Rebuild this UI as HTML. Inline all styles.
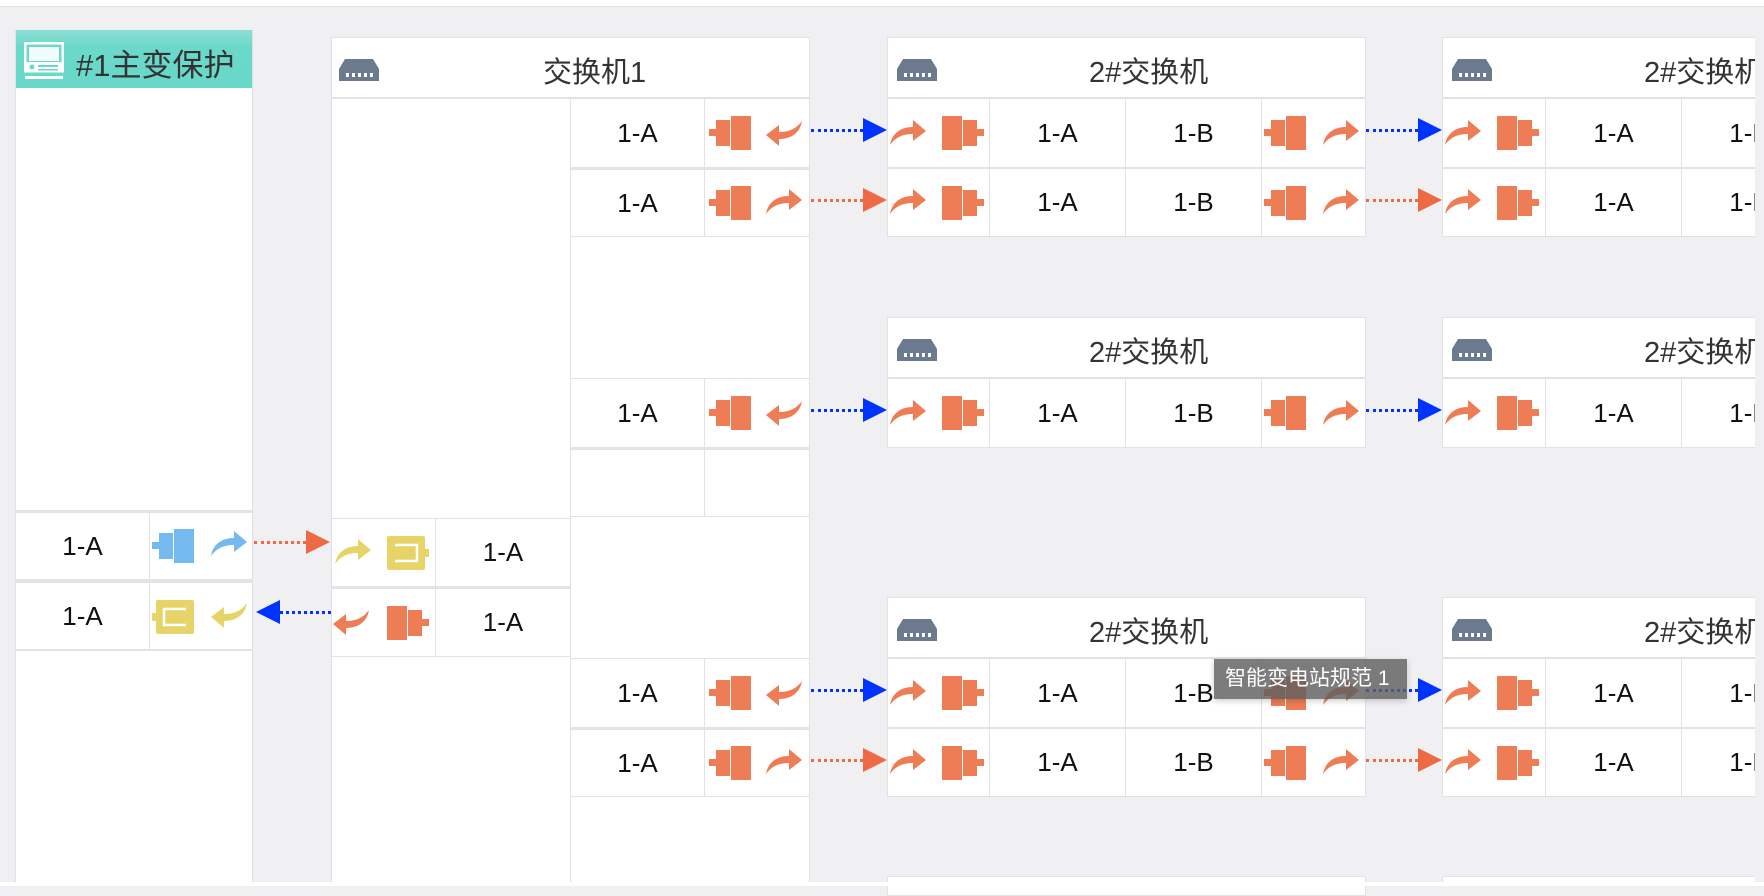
<!DOCTYPE html>
<html><head><meta charset="utf-8">
<style>
*{margin:0;padding:0;box-sizing:border-box}
body{width:1764px;height:886px;background:#f0f0f3;position:relative;overflow:hidden;font-family:"Liberation Sans","Noto Sans CJK SC",sans-serif;color:#111}
.b{position:absolute;background:#fff;border:1px solid #e1e1e6}
.t{position:absolute;display:flex;align-items:center;justify-content:center;font-size:26px;background:#fff;border:1px solid #e1e1e6}
.h{position:absolute;font-size:29px;color:#333;white-space:nowrap}
svg.i{position:absolute}
.dl{position:absolute;height:0;border-top:3px dotted}
.tri{position:absolute;width:0;height:0;border-top:12px solid transparent;border-bottom:12px solid transparent}
</style></head><body>
<svg width="0" height="0" style="position:absolute">
<defs>
<symbol id="pL" viewBox="0 0 42 34"><rect x="0" y="13" width="7" height="7"/><rect x="7" y="4" width="14" height="26"/><rect x="22" y="0" width="20" height="34"/></symbol>
<symbol id="pR" viewBox="0 0 42 34"><rect x="0" y="0" width="20" height="34"/><rect x="21" y="4" width="14" height="26"/><rect x="35" y="13" width="7" height="7"/></symbol>
<symbol id="aR" viewBox="0 0 38 26"><path d="M1 25 C3 13 12 7 24 7 L24 0 L37 11 L24 21 L24 14 C14 14 7 17 1 25 Z"/></symbol>
<symbol id="aL" viewBox="0 0 38 26"><path d="M37 1 C35 13 26 19 14 19 L14 26 L1 15 L14 5 L14 12 C24 12 31 9 37 1 Z"/></symbol>
<symbol id="yb" viewBox="0 0 42 34"><rect x="0" y="0" width="38" height="34" rx="2"/><rect x="38" y="13" width="4" height="8"/><path d="M8 9 H30 V25 H8" fill="none" stroke="#fff" stroke-width="2.5"/></symbol>
<symbol id="ybL" viewBox="0 0 42 34"><rect x="4" y="0" width="38" height="34" rx="2"/><rect x="0" y="13" width="4" height="8"/><path d="M34 9 H12 V25 H34" fill="none" stroke="#fff" stroke-width="2.5"/></symbol>
<symbol id="sw" viewBox="0 0 40 22"><path d="M6 0 H34 L40 10 H0 Z"/><rect x="0" y="10" width="40" height="12"/><g fill="#fff"><rect x="7" y="14" width="3" height="4"/><rect x="13" y="14" width="3" height="4"/><rect x="19" y="14" width="3" height="4"/><rect x="25" y="14" width="3" height="4"/><rect x="31" y="14" width="3" height="4"/></g></symbol>
</defs></svg>

<div style="position:absolute;left:0;top:0;width:1764px;height:7px;background:#fff;border-bottom:1px solid #e2e2e6"></div>

<!-- Panel 1 -->
<div class="b" style="left:15px;top:30px;width:238px;height:856px"></div>
<div style="position:absolute;left:16px;top:30px;width:236px;height:58px;background:linear-gradient(#8adfd4,#6bd9c9 30%,#68d8c8)"></div>
<svg class="i" style="left:24px;top:42px" width="40" height="38" viewBox="0 0 40 38" fill="#fff"><rect x="1" y="1" width="38" height="28" fill="none" stroke="#fff" stroke-width="3"/><rect x="5" y="5" width="30" height="14" fill="#fff" opacity=".9"/><rect x="1" y="20" width="38" height="10"/><circle cx="8" cy="25" r="2.5" fill="#6bd9c9"/><rect x="14" y="23" width="20" height="2" fill="#6bd9c9"/><rect x="14" y="27" width="20" height="1.5" fill="#6bd9c9"/><rect x="1" y="34" width="38" height="3"/></svg>
<div class="h" style="left:76px;top:40px;font-size:31px">#1主变保护</div>
<div style="position:absolute;left:16px;top:510px;width:236px;height:141px;background:#e4e4e8"></div>
<div class="t" style="left:15px;top:512px;width:135px;height:68px">1-A</div>
<div class="t" style="left:149px;top:512px;width:104px;height:68px"></div>
<div class="t" style="left:15px;top:582px;width:135px;height:68px">1-A</div>
<div class="t" style="left:149px;top:582px;width:104px;height:68px"></div>
<svg class="i" style="left:152px;top:529px;fill:#74b9ef" width="42" height="34"><use href="#pL"/></svg>
<svg class="i" style="left:210px;top:531px;fill:#74b9ef" width="38" height="26"><use href="#aR"/></svg>
<svg class="i" style="left:152px;top:600px;fill:#e7d468" width="42" height="34"><use href="#ybL"/></svg>
<svg class="i" style="left:210px;top:602px;fill:#e7d468" width="38" height="26"><use href="#aL"/></svg>

<!-- arrows panel1<->panel2 -->
<div class="dl" style="left:254px;top:541px;width:52px;border-color:#ee6a45"></div>
<div class="tri" style="left:306px;top:530px;border-left:24px solid #ee6a45"></div>
<div class="dl" style="left:280px;top:611px;width:51px;border-color:#0033ff"></div>
<div class="tri" style="left:256px;top:600px;border-right:24px solid #0033ff"></div>

<!-- Panel 2 -->
<div class="b" style="left:331px;top:37px;width:479px;height:849px"></div>
<div class="b" style="left:331px;top:37px;width:479px;height:61px"></div>
<svg class="i" style="left:339px;top:59px;fill:#6b7a8f" width="40" height="22"><use href="#sw"/></svg>
<div class="h" style="left:543px;top:49px">交换机1</div>
<div style="position:absolute;left:332px;top:97px;width:477px;height:2px;background:#e4e4e8"></div>
<div class="b" style="left:570px;top:98px;width:240px;height:788px"></div>
<div class="t" style="left:570px;top:98px;width:135px;height:70px">1-A</div><div class="t" style="left:704px;top:98px;width:106px;height:70px"></div>
<div style="position:absolute;left:571px;top:167px;width:238px;height:3px;background:#e4e4e8"></div>
<div class="t" style="left:570px;top:169px;width:135px;height:68px">1-A</div><div class="t" style="left:704px;top:169px;width:106px;height:68px"></div>
<div class="t" style="left:570px;top:378px;width:135px;height:70px">1-A</div><div class="t" style="left:704px;top:378px;width:106px;height:70px"></div>
<div style="position:absolute;left:571px;top:447px;width:238px;height:3px;background:#e4e4e8"></div>
<div class="t" style="left:570px;top:449px;width:135px;height:68px"></div><div class="t" style="left:704px;top:449px;width:106px;height:68px"></div>
<div class="t" style="left:570px;top:658px;width:135px;height:70px">1-A</div><div class="t" style="left:704px;top:658px;width:106px;height:70px"></div>
<div style="position:absolute;left:571px;top:727px;width:238px;height:3px;background:#e4e4e8"></div>
<div class="t" style="left:570px;top:729px;width:135px;height:68px">1-A</div><div class="t" style="left:704px;top:729px;width:106px;height:68px"></div>
<div class="t" style="left:331px;top:518px;width:105px;height:69px"></div><div class="t" style="left:435px;top:518px;width:136px;height:69px">1-A</div>
<div style="position:absolute;left:332px;top:586px;width:238px;height:3px;background:#e4e4e8"></div>
<div class="t" style="left:331px;top:588px;width:105px;height:69px"></div><div class="t" style="left:435px;top:588px;width:136px;height:69px">1-A</div>
<svg class="i" style="left:334px;top:539px;fill:#e7d468" width="38" height="26"><use href="#aR"/></svg>
<svg class="i" style="left:387px;top:536px;fill:#e7d468" width="42" height="34"><use href="#yb"/></svg>
<svg class="i" style="left:332px;top:609px;fill:#ee7d55" width="38" height="26"><use href="#aL"/></svg>
<svg class="i" style="left:387px;top:606px;fill:#ee7d55" width="42" height="34"><use href="#pR"/></svg>

<svg class="i" style="left:709px;top:116px;fill:#ee7d55" width="42" height="34"><use href="#pL"/></svg><svg class="i" style="left:765px;top:120px;fill:#ee7d55" width="38" height="26"><use href="#aL"/></svg>
<svg class="i" style="left:709px;top:186px;fill:#ee7d55" width="42" height="34"><use href="#pL"/></svg><svg class="i" style="left:765px;top:189px;fill:#ee7d55" width="38" height="26"><use href="#aR"/></svg>
<svg class="i" style="left:709px;top:396px;fill:#ee7d55" width="42" height="34"><use href="#pL"/></svg><svg class="i" style="left:765px;top:400px;fill:#ee7d55" width="38" height="26"><use href="#aL"/></svg>
<svg class="i" style="left:709px;top:676px;fill:#ee7d55" width="42" height="34"><use href="#pL"/></svg><svg class="i" style="left:765px;top:680px;fill:#ee7d55" width="38" height="26"><use href="#aL"/></svg>
<svg class="i" style="left:709px;top:746px;fill:#ee7d55" width="42" height="34"><use href="#pL"/></svg><svg class="i" style="left:765px;top:749px;fill:#ee7d55" width="38" height="26"><use href="#aR"/></svg>

<div class="dl" style="left:811px;top:129px;width:52px;border-color:#0033ff"></div><div class="tri" style="left:863px;top:118px;border-left:24px solid #0033ff"></div>
<div class="dl" style="left:811px;top:199px;width:52px;border-color:#ee6a45"></div><div class="tri" style="left:863px;top:188px;border-left:24px solid #ee6a45"></div>
<div class="dl" style="left:811px;top:409px;width:52px;border-color:#0033ff"></div><div class="tri" style="left:863px;top:398px;border-left:24px solid #0033ff"></div>
<div class="dl" style="left:811px;top:689px;width:52px;border-color:#0033ff"></div><div class="tri" style="left:863px;top:678px;border-left:24px solid #0033ff"></div>
<div class="dl" style="left:811px;top:759px;width:52px;border-color:#ee6a45"></div><div class="tri" style="left:863px;top:748px;border-left:24px solid #ee6a45"></div>

<div class="b" style="left:887px;top:37px;width:479px;height:61px"></div>
<svg class="i" style="left:897px;top:59px;fill:#6b7a8f" width="40" height="22"><use href="#sw"/></svg>
<div class="h" style="left:1089px;top:49px">2#交换机</div>
<div class="t" style="left:887px;top:98px;width:103px;height:70px"></div><div class="t" style="left:989px;top:98px;width:137px;height:70px">1-A</div><div class="t" style="left:1125px;top:98px;width:137px;height:70px">1-B</div><div class="t" style="left:1261px;top:98px;width:105px;height:70px"></div>
<div style="position:absolute;left:888px;top:167px;width:477px;height:2px;background:#e4e4e8"></div>
<div class="t" style="left:887px;top:168px;width:103px;height:69px"></div><div class="t" style="left:989px;top:168px;width:137px;height:69px">1-A</div><div class="t" style="left:1125px;top:168px;width:137px;height:69px">1-B</div><div class="t" style="left:1261px;top:168px;width:105px;height:69px"></div>
<div class="b" style="left:887px;top:317px;width:479px;height:61px"></div>
<svg class="i" style="left:897px;top:339px;fill:#6b7a8f" width="40" height="22"><use href="#sw"/></svg>
<div class="h" style="left:1089px;top:329px">2#交换机</div>
<div class="t" style="left:887px;top:378px;width:103px;height:70px"></div><div class="t" style="left:989px;top:378px;width:137px;height:70px">1-A</div><div class="t" style="left:1125px;top:378px;width:137px;height:70px">1-B</div><div class="t" style="left:1261px;top:378px;width:105px;height:70px"></div>
<div class="b" style="left:887px;top:597px;width:479px;height:61px"></div>
<svg class="i" style="left:897px;top:619px;fill:#6b7a8f" width="40" height="22"><use href="#sw"/></svg>
<div class="h" style="left:1089px;top:609px">2#交换机</div>
<div class="t" style="left:887px;top:658px;width:103px;height:70px"></div><div class="t" style="left:989px;top:658px;width:137px;height:70px">1-A</div><div class="t" style="left:1125px;top:658px;width:137px;height:70px">1-B</div><div class="t" style="left:1261px;top:658px;width:105px;height:70px"></div>
<div style="position:absolute;left:888px;top:727px;width:477px;height:2px;background:#e4e4e8"></div>
<div class="t" style="left:887px;top:728px;width:103px;height:69px"></div><div class="t" style="left:989px;top:728px;width:137px;height:69px">1-A</div><div class="t" style="left:1125px;top:728px;width:137px;height:69px">1-B</div><div class="t" style="left:1261px;top:728px;width:105px;height:69px"></div>
<div class="b" style="left:887px;top:876px;width:479px;height:20px"></div>

<svg class="i" style="left:889px;top:120px;fill:#ee7d55" width="38" height="26"><use href="#aR"/></svg><svg class="i" style="left:942px;top:116px;fill:#ee7d55" width="42" height="34"><use href="#pR"/></svg>
<svg class="i" style="left:1264px;top:116px;fill:#ee7d55" width="42" height="34"><use href="#pL"/></svg><svg class="i" style="left:1322px;top:120px;fill:#ee7d55" width="38" height="26"><use href="#aR"/></svg>
<svg class="i" style="left:889px;top:189px;fill:#ee7d55" width="38" height="26"><use href="#aR"/></svg><svg class="i" style="left:942px;top:186px;fill:#ee7d55" width="42" height="34"><use href="#pR"/></svg>
<svg class="i" style="left:1264px;top:186px;fill:#ee7d55" width="42" height="34"><use href="#pL"/></svg><svg class="i" style="left:1322px;top:189px;fill:#ee7d55" width="38" height="26"><use href="#aR"/></svg>
<svg class="i" style="left:889px;top:400px;fill:#ee7d55" width="38" height="26"><use href="#aR"/></svg><svg class="i" style="left:942px;top:396px;fill:#ee7d55" width="42" height="34"><use href="#pR"/></svg>
<svg class="i" style="left:1264px;top:396px;fill:#ee7d55" width="42" height="34"><use href="#pL"/></svg><svg class="i" style="left:1322px;top:400px;fill:#ee7d55" width="38" height="26"><use href="#aR"/></svg>
<svg class="i" style="left:889px;top:680px;fill:#ee7d55" width="38" height="26"><use href="#aR"/></svg><svg class="i" style="left:942px;top:676px;fill:#ee7d55" width="42" height="34"><use href="#pR"/></svg>
<svg class="i" style="left:1264px;top:676px;fill:#ee7d55" width="42" height="34"><use href="#pL"/></svg><svg class="i" style="left:1322px;top:680px;fill:#ee7d55" width="38" height="26"><use href="#aR"/></svg>
<svg class="i" style="left:889px;top:749px;fill:#ee7d55" width="38" height="26"><use href="#aR"/></svg><svg class="i" style="left:942px;top:746px;fill:#ee7d55" width="42" height="34"><use href="#pR"/></svg>
<svg class="i" style="left:1264px;top:746px;fill:#ee7d55" width="42" height="34"><use href="#pL"/></svg><svg class="i" style="left:1322px;top:749px;fill:#ee7d55" width="38" height="26"><use href="#aR"/></svg>

<div class="dl" style="left:1366px;top:129px;width:52px;border-color:#0033ff"></div><div class="tri" style="left:1418px;top:118px;border-left:24px solid #0033ff"></div>
<div class="dl" style="left:1366px;top:199px;width:52px;border-color:#ee6a45"></div><div class="tri" style="left:1418px;top:188px;border-left:24px solid #ee6a45"></div>
<div class="dl" style="left:1366px;top:409px;width:52px;border-color:#0033ff"></div><div class="tri" style="left:1418px;top:398px;border-left:24px solid #0033ff"></div>
<div class="dl" style="left:1366px;top:689px;width:52px;border-color:#0033ff"></div><div class="tri" style="left:1418px;top:678px;border-left:24px solid #0033ff"></div>
<div class="dl" style="left:1366px;top:759px;width:52px;border-color:#ee6a45"></div><div class="tri" style="left:1418px;top:748px;border-left:24px solid #ee6a45"></div>

<div style="position:absolute;left:1442px;top:0;width:313px;height:886px;overflow:hidden">
<div style="position:absolute;left:-1442px;top:0;width:2000px;height:886px">
<div class="b" style="left:1442px;top:37px;width:479px;height:61px"></div>
<svg class="i" style="left:1452px;top:59px;fill:#6b7a8f" width="40" height="22"><use href="#sw"/></svg>
<div class="h" style="left:1644px;top:49px">2#交换机</div>
<div class="t" style="left:1442px;top:98px;width:104px;height:70px"></div><div class="t" style="left:1545px;top:98px;width:137px;height:70px">1-A</div><div class="t" style="left:1681px;top:98px;width:137px;height:70px">1-B</div>
<div style="position:absolute;left:1443px;top:167px;width:477px;height:2px;background:#e4e4e8"></div>
<div class="t" style="left:1442px;top:168px;width:104px;height:69px"></div><div class="t" style="left:1545px;top:168px;width:137px;height:69px">1-A</div><div class="t" style="left:1681px;top:168px;width:137px;height:69px">1-B</div>
<div class="b" style="left:1442px;top:317px;width:479px;height:61px"></div>
<svg class="i" style="left:1452px;top:339px;fill:#6b7a8f" width="40" height="22"><use href="#sw"/></svg>
<div class="h" style="left:1644px;top:329px">2#交换机</div>
<div class="t" style="left:1442px;top:378px;width:104px;height:70px"></div><div class="t" style="left:1545px;top:378px;width:137px;height:70px">1-A</div><div class="t" style="left:1681px;top:378px;width:137px;height:70px">1-B</div>
<div class="b" style="left:1442px;top:597px;width:479px;height:61px"></div>
<svg class="i" style="left:1452px;top:619px;fill:#6b7a8f" width="40" height="22"><use href="#sw"/></svg>
<div class="h" style="left:1644px;top:609px">2#交换机</div>
<div class="t" style="left:1442px;top:658px;width:104px;height:70px"></div><div class="t" style="left:1545px;top:658px;width:137px;height:70px">1-A</div><div class="t" style="left:1681px;top:658px;width:137px;height:70px">1-B</div>
<div style="position:absolute;left:1443px;top:727px;width:477px;height:2px;background:#e4e4e8"></div>
<div class="t" style="left:1442px;top:728px;width:104px;height:69px"></div><div class="t" style="left:1545px;top:728px;width:137px;height:69px">1-A</div><div class="t" style="left:1681px;top:728px;width:137px;height:69px">1-B</div>
<div class="b" style="left:1442px;top:876px;width:479px;height:20px"></div>
<svg class="i" style="left:1444px;top:120px;fill:#ee7d55" width="38" height="26"><use href="#aR"/></svg><svg class="i" style="left:1497px;top:116px;fill:#ee7d55" width="42" height="34"><use href="#pR"/></svg>
<svg class="i" style="left:1444px;top:189px;fill:#ee7d55" width="38" height="26"><use href="#aR"/></svg><svg class="i" style="left:1497px;top:186px;fill:#ee7d55" width="42" height="34"><use href="#pR"/></svg>
<svg class="i" style="left:1444px;top:400px;fill:#ee7d55" width="38" height="26"><use href="#aR"/></svg><svg class="i" style="left:1497px;top:396px;fill:#ee7d55" width="42" height="34"><use href="#pR"/></svg>
<svg class="i" style="left:1444px;top:680px;fill:#ee7d55" width="38" height="26"><use href="#aR"/></svg><svg class="i" style="left:1497px;top:676px;fill:#ee7d55" width="42" height="34"><use href="#pR"/></svg>
<svg class="i" style="left:1444px;top:749px;fill:#ee7d55" width="38" height="26"><use href="#aR"/></svg><svg class="i" style="left:1497px;top:746px;fill:#ee7d55" width="42" height="34"><use href="#pR"/></svg>
</div></div>

<div style="position:absolute;left:1214px;top:659px;width:193px;height:40px;background:rgba(95,95,95,0.82);color:#fff;font-size:21px;line-height:40px;padding-left:11px;white-space:nowrap;box-shadow:0 2px 6px rgba(0,0,0,.2)">智能变电站规范 1</div>

<div style="position:absolute;left:0;top:882px;width:1764px;height:4px;background:#fff"></div>
</body></html>
